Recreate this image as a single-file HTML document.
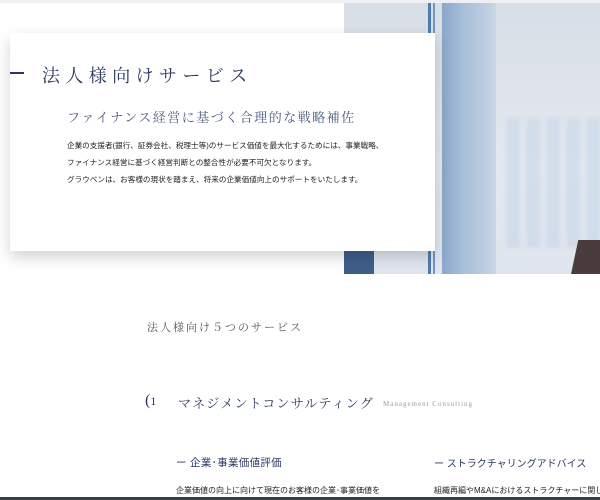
<!DOCTYPE html>
<html><head><meta charset="utf-8"><style>
body{margin:0;width:600px;height:500px;overflow:hidden;background:#fff;position:relative;font-family:"Liberation Sans","Noto Sans CJK JP",sans-serif;}
.a{position:absolute;white-space:nowrap}
.serif{font-family:"Liberation Serif","Noto Serif CJK SC",serif}
</style></head><body>
<div class="a" style="left:0;top:0;width:600px;height:3px;background:#eef0f4"></div>
<div class="a" style="left:344px;top:3px;width:256px;height:271px;background:linear-gradient(180deg,#d8dee6,#e4e9f0 60%,#dfe5ee);overflow:hidden">
  <div class="a" style="left:84px;top:0;width:3px;height:271px;background:#4f7cb0"></div>
  <div class="a" style="left:89px;top:0;width:2px;height:271px;background:#6f95c2"></div>
  <div class="a" style="left:98px;top:0;width:54px;height:271px;background:linear-gradient(90deg,#8aa7c9,#a7bfd9 40%,#bccde0 80%,#cbd7e5)"></div>
  <div class="a" style="left:162px;top:115px;width:94px;height:130px;background:repeating-linear-gradient(90deg,rgba(190,208,230,.45) 0 14px,transparent 14px 20px);filter:blur(2px)"></div>
  <div class="a" style="left:0;top:248px;width:30px;height:23px;background:#3f5f8a"></div>
  <div class="a" style="left:230px;top:237px;width:34px;height:40px;background:#4a3c3c;transform:skewX(-12deg)"></div>
</div>
<div class="a" style="left:10px;top:33px;width:425px;height:218px;background:#fff;box-shadow:0 6px 14px rgba(0,0,0,.18)"></div>
<div class="a" style="left:10px;top:72px;width:14px;height:2px;background:#2a3a5e"></div>
<div class="a serif" style="left:42px;top:62px;font-size:18px;letter-spacing:5.4px;color:#2a3a5e">法人様向けサービス</div>
<div class="a serif" style="left:67px;top:107px;font-size:13px;letter-spacing:1.5px;color:#4a5a80">ファイナンス経営に基づく合理的な戦略補佐</div>
<div class="a" style="left:67px;top:137px;font-size:7.6px;line-height:17px;color:#222">企業の支援者(銀行、証券会社、税理士等)のサービス価値を最大化するためには、事業戦略、<br>ファイナンス経営に基づく経営判断との整合性が必要不可欠となります。<br>グラウベンは、お客様の現状を踏まえ、将来の企業価値向上のサポートをいたします。</div>
<div class="a serif" style="left:147px;top:319px;font-size:11px;letter-spacing:2px;color:#555">法人様向け５つのサービス</div>
<div class="a serif" style="left:145px;top:392px;font-size:16px;color:#2a3a5e">(<span style="font-size:12px">1</span></div>
<div class="a serif" style="left:178px;top:393px;font-size:13px;letter-spacing:1.2px;color:#2a3a5e">マネジメントコンサルティング</div>
<div class="a serif" style="left:383px;top:400px;font-size:7px;letter-spacing:1px;color:#99a">Management Consulting</div>
<div class="a" style="left:176px;top:455px;font-size:10.5px;letter-spacing:.3px;color:#2a3a5e">ー 企業･事業価値評価</div>
<div class="a" style="left:434px;top:455px;font-size:10px;color:#2a3a5e">ー ストラクチャリングアドバイス</div>
<div class="a" style="left:176px;top:485px;font-size:8px;color:#222">企業価値の向上に向けて現在のお客様の企業･事業価値を</div>
<div class="a" style="left:434px;top:485px;font-size:8px;color:#222">組織再編やM&amp;Aにおけるストラクチャーに関し</div>
<div class="a" style="left:0;top:497px;width:600px;height:3px;background:#3a3f48"></div>
</body></html>
